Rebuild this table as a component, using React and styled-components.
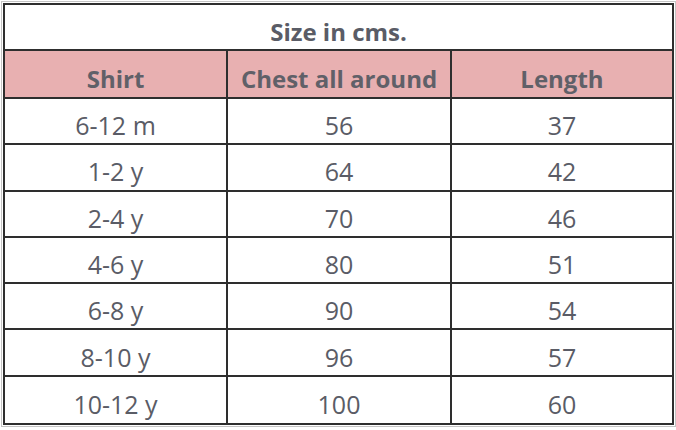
import React from "react";
import styled, { createGlobalStyle } from "styled-components";

const Global = createGlobalStyle`
  html, body { margin: 0; padding: 0; background: #ffffff; }
  body { font-family: "Open Sans", "Liberation Sans", sans-serif; }
`;

const Page = styled.div`
  width: 676px;
  height: 430px;
  padding: 3px 0 0 3px;
  box-sizing: border-box;
`;

const Table = styled.div`
  width: 671px;
  height: 422px;
  box-sizing: border-box;
  border: 2px solid #2e2e2e;
  outline: 1px solid #c4c4c4;
  outline-offset: 1px;
  display: grid;
  grid-template-columns: 223px 224px 1fr;
  grid-template-rows: 46px 48px repeat(7, 1fr);
  background: #ffffff;
`;

const Title = styled.div`
  grid-column: 1 / -1;
  display: flex;
  align-items: center;
  justify-content: center;
  font-weight: 700;
  font-size: 24px;
  color: #5a5c66;
  border-bottom: 2px solid #2e2e2e;
  padding-top: 8px;
  box-sizing: border-box;
`;

const Cell = styled.div`
  display: flex;
  align-items: center;
  justify-content: center;
  box-sizing: border-box;
  font-size: ${(p) => (p.$head ? "24px" : "25px")};
  font-weight: ${(p) => (p.$head ? 700 : 400)};
  color: ${(p) => (p.$head ? "#606068" : "#5a5c66")};
  background: ${(p) => (p.$head ? "#e8b0b1" : "transparent")};
  border-right: ${(p) => (p.$last ? "none" : "2px solid #2e2e2e")};
  border-bottom: ${(p) => (p.$bottom ? "none" : "2px solid #2e2e2e")};
  padding-top: 8px;
`;

const headers = ["Shirt", "Chest all around", "Length"];
const rows = [
  ["6-12 m", "56", "37"],
  ["1-2 y", "64", "42"],
  ["2-4 y", "70", "46"],
  ["4-6 y", "80", "51"],
  ["6-8 y", "90", "54"],
  ["8-10 y", "96", "57"],
  ["10-12 y", "100", "60"],
];

export default function App() {
  return (
    <>
      <Global />
      <Page>
        <Table>
          <Title>Size in cms.</Title>
          {headers.map((h, i) => (
            <Cell key={h} $head $last={i === 2}>
              {h}
            </Cell>
          ))}
          {rows.map((r, ri) =>
            r.map((c, ci) => (
              <Cell key={ri + "-" + ci} $last={ci === 2} $bottom={ri === rows.length - 1}>
                {c}
              </Cell>
            ))
          )}
        </Table>
      </Page>
    </>
  );
}
